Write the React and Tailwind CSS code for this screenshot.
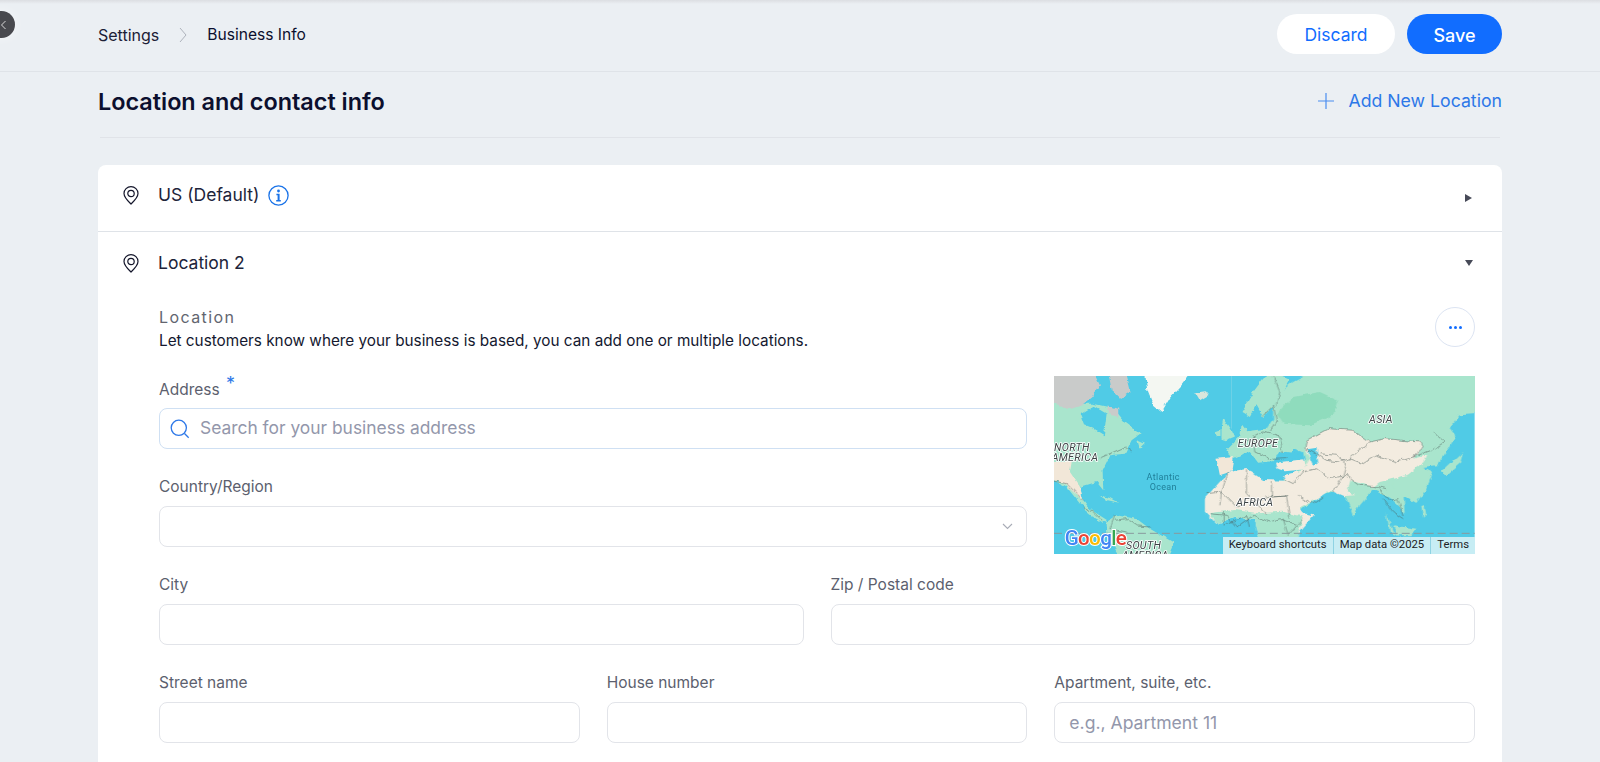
import React from "react";

const font = { fontFamily: "Inter, 'Noto Sans', sans-serif" };

const Pin = () => (
  <svg width="16" height="19" viewBox="0 0 16 19" fill="none" stroke="#14162b" strokeWidth="1.2">
    <path d="M8 18 C5.5 15.5 1 11.5 1 7.5 A7 6.8 0 0 1 15 7.5 C15 11.5 10.5 15.5 8 18 Z" />
    <circle cx="8" cy="7.5" r="3.2" />
  </svg>
);

const InfoIcon = () => (
  <svg width="21" height="21" viewBox="0 0 21 21" fill="none">
    <circle cx="10.5" cy="10.5" r="9.6" stroke="#1a73e8" strokeWidth="1.3" />
    <circle cx="10.5" cy="6" r="1.4" fill="#1a73e8" />
    <path d="M8.4 8.8h3.2v6.2h1.2v1.4H8.2V15h1.4v-4.8H8.4z" fill="#1a73e8" />
  </svg>
);

const Field = ({ label, placeholder, children }) => (
  <div className="flex flex-col">
    <label className="mb-[10px] h-5 text-[15.5px] leading-[22px] text-[#5c5f6e]">{label}</label>
    {children || (
      <input
        placeholder={placeholder}
        className="h-[41px] w-full rounded-lg border border-[#e2e4e9] bg-white px-[14px] text-[17.6px] outline-none placeholder:text-[#9397ab]"
      />
    )}
  </div>
);

const WorldMap = () => (
  <svg viewBox="12 12 1263 534" preserveAspectRatio="none" className="block h-full w-full">
    <defs>
      <filter id="coast" x="-5%" y="-5%" width="110%" height="110%">
        <feTurbulence type="fractalNoise" baseFrequency="0.045" numOctaves="3" seed="4" result="noise" />
        <feDisplacementMap in="SourceGraphic" in2="noise" scale="14" xChannelSelector="R" yChannelSelector="G" />
        <feGaussianBlur stdDeviation="0.9" />
      </filter>
    </defs>
    <rect x="12" y="12" width="1263" height="534" fill="#50cbe6" />

    <g filter="url(#coast)">
      {/* arctic and north america */}
      <polygon fill="#a9e5cd" points="0,90 60,95 130,95 175,105 200,120 225,150 272,185 245,205 225,245 180,250 158,295 160,355 140,330 90,345 100,385 130,425 90,395 50,345 0,320" />
      <polygon fill="#50cbe6" points="92,125 130,102 170,125 162,190 130,170 105,160" />
      <polygon fill="#c9cbca" points="0,0 130,0 150,40 125,75 95,100 60,112 0,95" />
      <polygon fill="#c9cbca" points="175,0 225,0 240,60 210,80 185,55" />
      <polygon fill="#c9cbca" points="170,100 205,110 205,135 175,125" />
      <polygon fill="#f2e7d8" points="0,270 65,270 60,300 90,345 100,385 75,365 45,335 0,320" />
      <polygon fill="#a9e5cd" points="262,205 285,215 270,230" />
      <polygon fill="#f4f7f2" points="285,0 425,0 395,40 362,75 335,120 310,100 292,55" />
      <polygon fill="#d9e6dc" points="435,62 465,58 476,72 450,88" />
      <polygon fill="#a9e5cd" points="100,392 130,418 172,445 160,452 125,432 102,412" />
      <polygon fill="#a9e5cd" points="145,368 180,378 205,392 170,385" />

      {/* south america */}
      <polygon fill="#a9e5cd" points="170,450 200,430 262,442 300,470 372,512 352,560 212,560 172,490" />

      {/* europe */}
      <polygon fill="#a9e5cd" points="515,170 520,140 540,170 552,195 528,205 515,200" />
      <polygon fill="#a9e5cd" points="495,178 512,172 512,195 498,195" />
      <polygon fill="#a9e5cd" points="530,232 572,190 575,160 590,178 690,165 760,190 720,245 690,240 668,268 625,272 600,240 570,250 545,262" />
      <polygon fill="#f2e7d8" points="500,260 552,255 545,298 510,310" />
      <polygon fill="#a9e5cd" points="575,120 610,60 640,20 672,0 720,20 700,60 672,100 640,135 620,100 600,135" />

      {/* eurasia */}
      <g transform="translate(630 0)">
        <polygon fill="#a9e5cd" points="40,100 60,60 100,30 160,0 250,0 660,0 660,125 600,130 570,165 590,190 560,240 530,280 490,285 520,300 500,350 470,392 432,372 435,425 415,400 395,380 370,365 340,350 300,400 280,432 260,380 240,355 190,365 160,390 100,425 85,355 70,320 125,290 135,265 130,240 90,225 60,190 20,170 40,140" />
        <polygon fill="#8fdcbd" points="50,125 100,75 180,60 235,85 220,130 150,160 70,155" />
        <polygon fill="#f3ece0" points="140,205 205,170 280,175 330,210 375,200 480,210 490,230 460,260 500,250 490,275 440,310 400,320 360,330 340,345 290,330 272,322 262,360 290,372 250,372 210,355 170,382 100,418 85,345 70,310 130,295 150,260 135,230" />
        <polygon fill="#a9e5cd" points="400,325 440,310 495,268 490,285 520,300 500,350 470,392 430,370 395,345" />
        <polygon fill="#a9e5cd" points="255,372 330,365 300,400 282,430" />
        <polygon fill="#f3ece0" points="48,272 130,262 138,292 75,298 55,292" />
        <polygon fill="#50cbe6" points="145,232 170,228 175,270 160,280 150,258" />
        <polygon fill="#50cbe6" points="62,238 128,246 132,258 62,262 48,252" />
        <polygon fill="#50cbe6" points="80,352 100,420 90,430 72,375" />
        <polygon fill="#a9e5cd" points="545,300 610,240 600,275 560,310" />
      </g>

      {/* africa */}
      <g transform="translate(0 -6)">
        <polygon fill="#f3ece0" points="465,385 510,335 540,305 590,297 640,330 708,332 722,350 760,430 792,436 745,490 738,560 640,560 615,450 555,440 500,462 465,425" />
        <polygon fill="#a9e5cd" points="478,430 555,420 625,430 700,425 760,440 745,490 738,560 640,560 615,450 555,440 500,462" />
      </g>
      <polygon fill="#a9e5cd" points="1115,405 1125,402 1130,430 1120,440" />
      <polygon fill="#a9e5cd" points="1030,460 1100,470 1085,490 1040,490" />
      <polygon fill="#a9e5cd" points="1010,420 1030,480 1060,500 1020,480" />

      {/* borders */}
      <g fill="none" stroke="#4f5f5c" strokeWidth="1.5" strokeLinejoin="round">
        <polyline points="150,258 225,225 245,240" />
        <polyline points="0,325 50,335 75,360 100,385" />
        <polyline points="100,405 130,420 160,448" />
        <polyline points="195,445 230,440 262,462 300,465" />
        <polyline points="195,430 180,470 230,480" />
        <polyline points="585,210 640,180 690,195 700,240" />
        <polyline points="610,190 615,240 665,262 710,260" />
        <polyline points="640,130 672,100 680,150 660,180" />
        <polyline points="672,16 690,60 680,100" />
        <polyline points="770,205 835,170 910,175 960,210 1005,200 1110,210 1120,230 1090,255 1145,235 1185,210 1150,180" />
        <polyline points="770,205 765,230 790,240 830,265 870,270 900,260 960,210" />
        <polyline points="900,260 940,275 980,250 1040,270 1090,255" />
        <polyline points="810,245 860,250 890,275 880,310 850,360" />
        <polyline points="800,290 840,320 890,310 930,340 990,345 1010,350" />
        <polyline points="985,345 1020,385 1045,380 1060,430" />
        <polyline points="1000,380 1030,420 1060,440" />
        <polyline points="700,320 730,335 760,300 800,290" />
        <polyline points="745,370 790,395 820,375" />
        <polyline points="470,365 515,360 560,405 600,392 660,375 710,372" />
        <polyline points="535,300 515,360 510,400" />
        <polyline points="590,295 590,365 650,425" />
        <polyline points="665,330 665,375 710,372 720,440" />
        <polyline points="480,425 530,430 560,465 610,430 660,450 690,440 740,460" />
        <polyline points="520,420 520,460 590,430 600,465" />
        <polyline points="700,440 715,490 760,440" />
      </g>
    </g>

    <line x1="545" y1="12" x2="545" y2="170" stroke="#8ed8e6" strokeWidth="1.5" />
    <line x1="12" y1="484" x2="1275" y2="484" stroke="#8a9a9e" strokeWidth="3" strokeDasharray="24 12" />

    {/* labels */}
    <g fontFamily="Roboto, sans-serif" fontStyle="italic" fontSize="32" fill="#3d4446" stroke="#fff" strokeWidth="5" paintOrder="stroke" strokeLinejoin="round">
      <text x="12" y="238" letterSpacing="1">NORTH</text>
      <text x="5" y="268" letterSpacing="1">AMERICA</text>
      <text x="564" y="226" letterSpacing="1">EUROPE</text>
      <text x="958" y="152" letterSpacing="1">ASIA</text>
      <text x="559" y="403" letterSpacing="1">AFRICA</text>
      <text x="228" y="532" letterSpacing="1">SOUTH</text>
      <text x="216" y="562" letterSpacing="1">AMERICA</text>
    </g>
    <g fontFamily="Roboto, sans-serif" fontSize="27" fill="#1f7f99" textAnchor="middle" letterSpacing="1">
      <text x="340" y="323">Atlantic</text>
      <text x="340" y="354">Ocean</text>
    </g>
    <text x="44" y="520" fontFamily="Roboto, sans-serif" fontWeight="500" fontSize="62" stroke="#fff" strokeWidth="6" paintOrder="stroke" letterSpacing="-2">
      <tspan fill="#4285f4">G</tspan>
      <tspan fill="#ea4335">o</tspan>
      <tspan fill="#fbbc05">o</tspan>
      <tspan fill="#4285f4">g</tspan>
      <tspan fill="#34a853">l</tspan>
      <tspan fill="#ea4335">e</tspan>
    </text>
  </svg>
);

export default function App() {
  return (
    <div className="relative h-[762px] overflow-hidden bg-[#ebeff3] text-[#0b0f2e]" style={font}>
      <div className="absolute left-0 top-0 h-[4px] w-full bg-gradient-to-b from-[#dcdee2] to-transparent" />

      {/* collapse handle */}
      <div className="absolute -left-[12px] top-[11px] flex h-[27px] w-[27px] items-center justify-end rounded-full bg-[#48494e] pr-[8px] shadow-[0_0_12px_rgba(255,255,255,0.5)]">
        <svg width="7" height="10" viewBox="0 0 7 10" fill="none" stroke="#d8d8d8" strokeWidth="1">
          <path d="M5.5 1 1.5 5l4 4" />
        </svg>
      </div>

      {/* top bar */}
      <header className="flex h-[72px] items-center justify-between border-b border-[#dfe3e8] px-[98px] pb-[3px]">
        <div className="flex items-center pt-[2px] text-[15.6px]">
          <span className="text-[16px] text-[#1c2036]">Settings</span>
          <svg className="mx-[20px]" width="8" height="16" viewBox="0 0 8 16" fill="none" stroke="#aeb3bc" strokeWidth="1">
            <path d="M1 1l6 7-6 7" />
          </svg>
          <span>Business Info</span>
        </div>
        <div className="flex items-center gap-3">
          <button className="h-10 w-[118px] rounded-full bg-white pt-[2px] text-[17.5px] text-[#116dff]">Discard</button>
          <button className="h-10 w-[95px] rounded-full bg-[#116dff] pt-[2px] text-[18px] font-medium text-white">Save</button>
        </div>
      </header>

      <main className="px-[98px]">
        <div className="mx-[2px] flex h-[66px] items-center justify-between border-b border-[#e0e3e8] pb-[6px]">
          <h1 className="-ml-[2px] text-[23.4px] font-semibold text-[#0b0f2e]">Location and contact info</h1>
          <button className="-mr-[2px] flex items-center text-[17.7px] text-[#2d78e8]">
            <svg className="mr-[14px]" width="16" height="16" viewBox="0 0 16 16" fill="none" stroke="#4a8df0" strokeWidth="1.2">
              <path d="M8 0v16M0 8h16" />
            </svg>
            Add New Location
          </button>
        </div>

        <section className="mt-[27px] rounded-t-lg bg-white">
          <div className="flex h-[67px] items-center justify-between border-b border-[#dfe3e8] pb-[6px] pl-[25px] pr-[30px]">
            <div className="flex items-center">
              <Pin />
              <span className="ml-[19px] text-[17.5px] text-[#20243a]">US (Default)</span>
              <span className="ml-[9px]"><InfoIcon /></span>
            </div>
            <span className="mt-[6px] h-0 w-0 border-y-[4.5px] border-l-[7px] border-y-transparent border-l-[#474a58]" />
          </div>

          <div className="flex h-[62px] items-center justify-between pl-[25px] pr-[29px]">
            <div className="flex items-center">
              <Pin />
              <span className="ml-[19px] text-[17.5px] text-[#20243a]">Location 2</span>
            </div>
            <span className="h-0 w-0 border-x-[4px] border-t-[6px] border-x-transparent border-t-[#474a58]" />
          </div>

          <div className="pb-10 pl-[61px] pr-[27px] pt-[13px]">
            <div className="flex items-start justify-between">
              <div>
                <h2 className="text-[16px] leading-5 tracking-[1.4px] text-[#62656f]">Location</h2>
                <p className="mt-1 text-[15.3px] leading-5 text-[#14182f]">
                  Let customers know where your business is based, you can add one or multiple locations.
                </p>
              </div>
              <button className="flex h-10 w-10 items-center justify-center gap-[2px] rounded-full border border-[#dce4f2] bg-white">
                <span className="h-[3px] w-[3px] rounded-full bg-[#116dff]" />
                <span className="h-[3px] w-[3px] rounded-full bg-[#116dff]" />
                <span className="h-[3px] w-[3px] rounded-full bg-[#116dff]" />
              </button>
            </div>

            <div className="mt-[27px] grid grid-cols-3 gap-x-[27px]">
              <div className="col-span-2 flex flex-col gap-[27px]">
                <Field
                  label={
                    <>
                      Address <span className="relative -top-[5px] ml-[2px] text-[18px] text-[#2d78e8]">*</span>
                    </>
                  }
                >
                  <div className="flex h-[41px] items-center rounded-lg border border-[#cfe0f3] bg-white pl-[10px]">
                    <svg width="20" height="20" viewBox="0 0 20 20" fill="none" stroke="#2d78e8" strokeWidth="1.3">
                      <circle cx="8.8" cy="8.8" r="7.6" />
                      <path d="M14.5 14.5l4.2 4.2" />
                    </svg>
                    <input
                      placeholder="Search for your business address"
                      className="ml-[10px] flex-1 text-[17.4px] outline-none placeholder:text-[#9397ab]"
                    />
                  </div>
                </Field>
                <Field label="Country/Region">
                  <div className="flex h-[41px] items-center justify-end rounded-lg border border-[#e2e4e9] bg-white pr-[13px]">
                    <svg width="11" height="7" viewBox="0 0 11 7" fill="none" stroke="#a8acb6" strokeWidth="1.1">
                      <path d="M1 1l4.5 4.5L10 1" />
                    </svg>
                  </div>
                </Field>
              </div>
              <div className="relative -mb-[7px] -mt-[2px] h-[178px] overflow-hidden">
                <WorldMap />
                <div className="absolute bottom-0 right-0 flex h-[17px] items-center bg-[#c7edf4] text-[11.3px] text-[#1d2224]" style={{ fontFamily: "Roboto, sans-serif" }}>
                  <span className="border-r border-[#8fd3e3] px-[6px]">Keyboard shortcuts</span>
                  <span className="border-r border-[#8fd3e3] px-[6px]">Map data ©2025</span>
                  <span className="px-[6px]">Terms</span>
                </div>
              </div>
            </div>

            <div className="mt-[27px] grid grid-cols-2 gap-[27px]">
              <Field label="City" />
              <Field label="Zip / Postal code" />
            </div>

            <div className="mt-[27px] grid grid-cols-3 gap-[27px]">
              <Field label="Street name" />
              <Field label="House number" />
              <Field label="Apartment, suite, etc." placeholder="e.g., Apartment 11" />
            </div>
          </div>
        </section>
      </main>
    </div>
  );
}
